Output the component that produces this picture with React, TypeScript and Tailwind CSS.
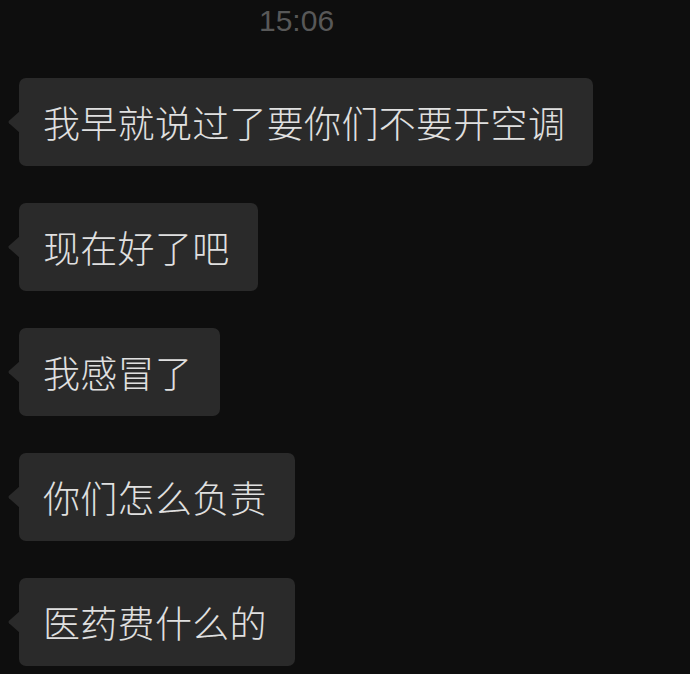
const messages = [
  "我早就说过了要你们不要开空调",
  "现在好了吧",
  "我感冒了",
  "你们怎么负责",
  "医药费什么的",
];

function Bubble({ text }: { text: string }) {
  return (
    <div className="relative ml-[19px] self-start">
      <svg
        className="absolute left-[-12px] top-1/2 -translate-y-1/2"
        width="13"
        height="22"
        viewBox="0 0 13 22"
      >
        <path d="M13 0 L13 22 L2 12.2 Q0.8 11 2 9.8 Z" fill="#2a2a2a" />
      </svg>
      <div className="flex h-[88px] items-center rounded-[7px] bg-[#2a2a2a] pl-[24px] pr-[28px]">
        <span className="text-[37px] font-light leading-none tracking-[0.3px] text-[#e0e0e0] [font-family:'Noto_Sans_CJK_SC',sans-serif]">
          {text}
        </span>
      </div>
    </div>
  );
}

export default function App() {
  return (
    <main className="flex h-[674px] w-[690px] flex-col overflow-hidden bg-[#0e0e0e]">
      <div className="pl-[259px] pt-[6px] text-[30px] leading-[30px] text-[#585858] [font-family:'Liberation_Sans',sans-serif]">
        15:06
      </div>
      <div className="mt-[42px] flex flex-col gap-[37px]">
        {messages.map((m) => (
          <Bubble key={m} text={m} />
        ))}
      </div>
    </main>
  );
}
